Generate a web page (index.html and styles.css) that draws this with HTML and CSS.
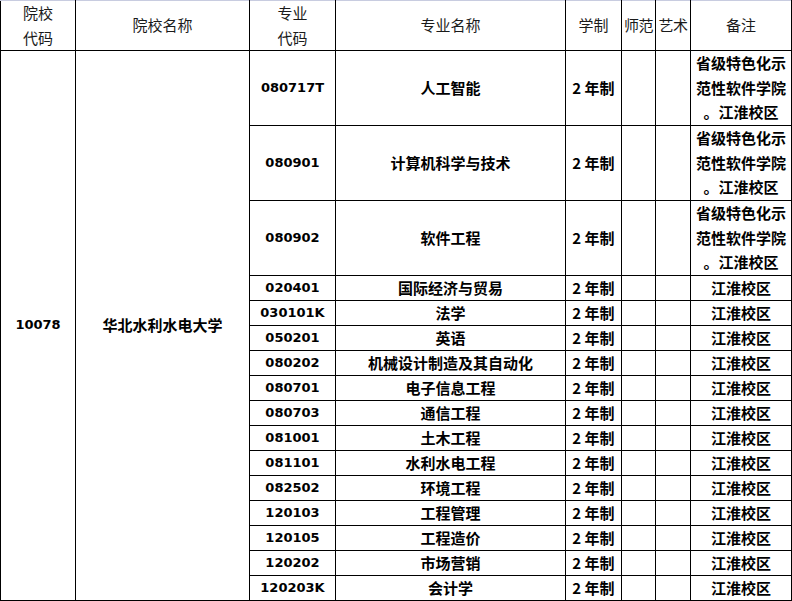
FILE: index.html
```html
<!DOCTYPE html>
<html lang="zh-CN">
<head>
<meta charset="utf-8">
<title>院校专业表</title>
<link rel="stylesheet" href="styles.css">
</head>
<body>
<table class="grid">
  <colgroup>
    <col class="c1"><col class="c2"><col class="c3"><col class="c4"><col class="c5"><col class="c6"><col class="c7"><col class="c8">
  </colgroup>
  <thead>
    <tr class="head">
      <th>院校<br>代码</th>
      <th>院校名称</th>
      <th>专业<br>代码</th>
      <th>专业名称</th>
      <th>学制</th>
      <th class="narrow">师范</th>
      <th class="narrow">艺术</th>
      <th>备注</th>
    </tr>
  </thead>
  <tbody>
    <tr class="tall">
      <td rowspan="16" class="code">10078</td>
      <td rowspan="16">华北水利水电大学</td>
      <td class="code">080717T</td>
      <td>人工智能</td>
      <td>2 年制</td><td></td><td></td>
      <td>省级特色化示<br>范性软件学院<br>。江淮校区</td>
    </tr>
    <tr class="tall">
      <td class="code">080901</td><td>计算机科学与技术</td><td>2 年制</td><td></td><td></td>
      <td>省级特色化示<br>范性软件学院<br>。江淮校区</td>
    </tr>
    <tr class="tall">
      <td class="code">080902</td><td>软件工程</td><td>2 年制</td><td></td><td></td>
      <td>省级特色化示<br>范性软件学院<br>。江淮校区</td>
    </tr>
    <tr><td class="code">020401</td><td>国际经济与贸易</td><td>2 年制</td><td></td><td></td><td>江淮校区</td></tr>
    <tr><td class="code">030101K</td><td>法学</td><td>2 年制</td><td></td><td></td><td>江淮校区</td></tr>
    <tr><td class="code">050201</td><td>英语</td><td>2 年制</td><td></td><td></td><td>江淮校区</td></tr>
    <tr><td class="code">080202</td><td>机械设计制造及其自动化</td><td>2 年制</td><td></td><td></td><td>江淮校区</td></tr>
    <tr><td class="code">080701</td><td>电子信息工程</td><td>2 年制</td><td></td><td></td><td>江淮校区</td></tr>
    <tr><td class="code">080703</td><td>通信工程</td><td>2 年制</td><td></td><td></td><td>江淮校区</td></tr>
    <tr><td class="code">081001</td><td>土木工程</td><td>2 年制</td><td></td><td></td><td>江淮校区</td></tr>
    <tr><td class="code">081101</td><td>水利水电工程</td><td>2 年制</td><td></td><td></td><td>江淮校区</td></tr>
    <tr><td class="code">082502</td><td>环境工程</td><td>2 年制</td><td></td><td></td><td>江淮校区</td></tr>
    <tr><td class="code">120103</td><td>工程管理</td><td>2 年制</td><td></td><td></td><td>江淮校区</td></tr>
    <tr><td class="code">120105</td><td>工程造价</td><td>2 年制</td><td></td><td></td><td>江淮校区</td></tr>
    <tr><td class="code">120202</td><td>市场营销</td><td>2 年制</td><td></td><td></td><td>江淮校区</td></tr>
    <tr><td class="code">120203K</td><td>会计学</td><td>2 年制</td><td></td><td></td><td>江淮校区</td></tr>
  </tbody>
</table>
</body>
</html>
```

FILE: styles.css
```css
html, body {
  margin: 0;
  padding: 0;
  background: #ffffff;
}

.grid {
  border-collapse: collapse;
  table-layout: fixed;
  width: 791px;
  font-family: "Noto Sans CJK SC", "DejaVu Sans", sans-serif;
  font-size: 15px;
  color: #000;
}

.c1 { width: 75px; }
.c2 { width: 174px; }
.c3 { width: 86px; }
.c4 { width: 230px; }
.c5 { width: 56px; }
.c6 { width: 34px; }
.c7 { width: 35px; }
.c8 { width: 101px; }

.grid th,
.grid td {
  border: 1px solid #000;
  padding: 0;
  text-align: center;
  vertical-align: middle;
  line-height: 20px;
  white-space: nowrap;
  overflow: visible;
}

.grid th {
  font-weight: 400;
  color: #1a1a1a;
  border-top-color: #c8cce0;
  line-height: 24.5px;
}

.grid td {
  font-weight: 700;
}

.head {
  height: 50px;
}

.grid tbody tr {
  height: 25px;
}

.grid tbody tr.tall {
  height: 75px;
}

.grid tbody tr.tall td {
  line-height: 24.5px;
}

.grid td.code {
  font-family: "DejaVu Sans", sans-serif;
  font-size: 13px;
  font-weight: 700;
}

.grid th.narrow {
  letter-spacing: -0.5px;
}
```
